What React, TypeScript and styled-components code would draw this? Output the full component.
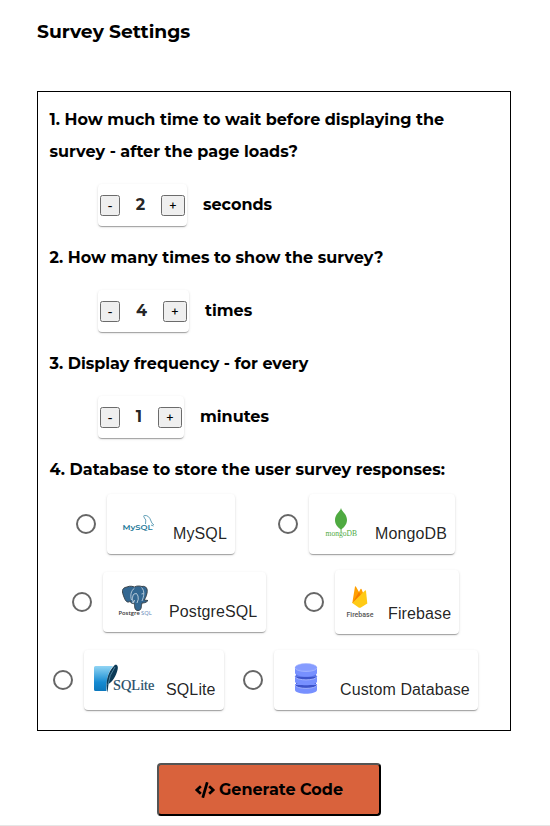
import React, { useState } from 'react';
import styled, { createGlobalStyle } from 'styled-components';
import { FaCode } from 'react-icons/fa';

const GlobalStyle = createGlobalStyle`
  *, *::before, *::after { box-sizing: border-box; }
  body {
    margin: 0;
    background: #fff;
    color: #000;
    font: 700 16px/32px Montserrat, Inter, sans-serif;
  }
`;

const Page = styled.main`
  height: 826px;
  padding: 16px 39px 0 37px;
  border-bottom: 1px solid #e6e6e6;
  display: flex;
  flex-direction: column;
`;

const Title = styled.h1`
  margin: 0 0 43px;
  font-size: 18.72px;
  line-height: 32px;
  letter-spacing: -0.04px;
`;

const Panel = styled.section`
  height: 640px;
  padding: 12px 11px 10px 12px;
  border: 1px solid #000;
`;

const Question = styled.div`
  margin-left: -0.5px;
  white-space: nowrap;
`;

const StepperRow = styled.div`
  display: flex;
  align-items: center;
  gap: 16px;
  height: 74px;
  padding-left: 48px;
`;

const Card = styled.div`
  display: flex;
  background: #fff;
  color: rgba(0, 0, 0, 0.87);
  border-radius: 4px;
  box-shadow: 0 2px 1px -1px rgba(0, 0, 0, 0.2), 0 1px 1px rgba(0, 0, 0, 0.14),
    0 1px 3px rgba(0, 0, 0, 0.12);
`;

const StepperCard = styled(Card)<{ $width: number }>`
  width: ${(p) => p.$width}px;
  height: 42px;
  padding: 0 2px;
  align-items: center;
  justify-content: space-between;
`;

const StepButton = styled.button<{ $width: number }>`
  width: ${(p) => p.$width}px;
  height: 21px;
  padding: 0;
  border: 1px solid #6b6b6b;
  border-radius: 2.5px;
  background: #efefef;
  color: #000;
  font: 500 13.33px/19px Montserrat, Inter, sans-serif;
`;

const Unit = styled.span`
  line-height: 32px;
`;

const OptionRow = styled.div<{ $indent: number; $gap: number }>`
  display: flex;
  align-items: center;
  height: 78px;
  padding-left: ${(p) => p.$indent}px;
  gap: ${(p) => p.$gap}px;
`;

const Option = styled.label`
  display: flex;
  align-items: center;
`;

const Radio = styled.input`
  appearance: none;
  flex: none;
  width: 20px;
  height: 20px;
  margin: 0 11px;
  border: 2px solid #666;
  border-radius: 50%;
  &:checked { background: radial-gradient(#1976d2 40%, transparent 45%); }
`;

const OptionCard = styled(Card)<{ $width: number; $height: number }>`
  width: ${(p) => p.$width}px;
  height: ${(p) => p.$height}px;
  align-items: flex-end;
`;

const OptionName = styled.span`
  padding: 0 0 11px 1px;
  font: 400 16px/18px 'Liberation Sans', Arial, sans-serif;
  letter-spacing: 0.12px;
  white-space: nowrap;
`;

const Logo = styled.svg`
  display: block;
  flex: none;
`;

const GenerateButton = styled.button`
  align-self: center;
  display: flex;
  align-items: center;
  justify-content: center;
  gap: 4px;
  width: 224px;
  height: 53px;
  margin: 32px 10px 0 0;
  padding: 0;
  border: 2px outset #000;
  border-radius: 4px;
  background: #d9623c;
  color: #000;
  font: inherit;
  svg { width: 20px; height: 16px; }
`;

const MySqlLogo = () => (
  <Logo width="65" height="60">
    <text x="15.500" y="36" fontSize="8" fontWeight="600" fontFamily="Montserrat, sans-serif" fill="#237999" textLength="30" lengthAdjust="spacingAndGlyphs">MySQL</text>
    <path d="M38.500 30L38.800 26Q35.500 21.500 37.500 21.500Q42 21 44 27Q44.500 29.500 47 31M44 31l2.500 1" fill="none" stroke="#237999" strokeWidth="0.7" />
  </Logo>
);

const MongoLogo = () => (
  <Logo width="65" height="60">
    <path d="M32 14C33 18 38 20 38 26C38 31 34 34 32.500 35.500V38H31.600V35.500C29 33 26 31 26 26C26 20 31 18 32 14Z" fill="#4faa41" />
    <text x="16.500" y="42" fontSize="7.500" fontWeight="400" fontFamily="'Liberation Serif', serif" fill="#4faa41" textLength="31.500" lengthAdjust="spacingAndGlyphs">mongoDB</text>
  </Logo>
);

const PostgresLogo = () => (
  <Logo width="65" height="60">
    <path d="M24 15C27 13.500 30 14.500 31.500 15C34 13.500 37 14 39 14.500C43 13.500 45 17 44 21C43.500 24 42 27 41 28L45 28.500C43 31 40 31 39 31C38 34 39 38.500 35 38.500C31 38.500 32 34 31 31C29 32 27.500 31 27.500 29C24 32 22 28 21 25C19 20 18 16 24 15Z" fill="#336791" stroke="#39434a" strokeWidth="1" />
    <path d="M31.500 16C28 19 27 23 28.500 28M31 31C29 29 29 24 31 22Q34 20 35 24Q36 27 34 31M38.500 15.500C42 19 41 24 39 29M38.500 22L40.500 21.500M29 30.500Q32 30 31.500 28" fill="none" stroke="#dce5ed" strokeWidth="0.75" />
    <text x="15.500" y="43" fontSize="5.800" fontWeight="600" fontFamily="'Open Sans', sans-serif" fill="#333">Postgre</text>
    <text x="38" y="43" fontSize="5.800" fontWeight="400" fontFamily="'Open Sans', sans-serif" fill="#6488b5">SQL</text>
  </Logo>
);

const FirebaseLogo = () => (
  <Logo width="52" height="64">
    <path d="M17.300 33L20 16.500Q20.500 16 21 16.700L24 22L25.500 19Q26 18.500 26.500 19L32 33Z" fill="#ffa000" />
    <path d="M17.300 33L24 22L26.500 26Z" fill="#f57c00" />
    <path d="M17.300 33L30 20.500Q30.800 20 31 21L32.300 33.500L25.500 37.700Q24.800 38 24 37.700Z" fill="#ffca16" />
    <text x="11.500" y="47.300" fontSize="6.800" fontWeight="500" fontFamily="Roboto, sans-serif" fill="#555" textLength="27" lengthAdjust="spacingAndGlyphs">Firebase</text>
  </Logo>
);

const SqliteLogo = () => (
  <Logo width="81" height="60">
    <defs>
      <linearGradient id="sqlite-blue" x1="0" y1="0" x2="0" y2="1">
        <stop offset="0" stopColor="#91d5f4" />
        <stop offset="0.65" stopColor="#168bd2" />
        <stop offset="1" stopColor="#0b78bd" />
      </linearGradient>
    </defs>
    <path d="M11.500 16H29C24 22 22 31 22.500 41H11.500Q10 41 10 39.500V17.500Q10 16 11.500 16Z" fill="url(#sqlite-blue)" />
    <path d="M31 14.800C33.500 14 34.500 17 33.500 20C32 26 28.500 32 24.500 34L23.500 42.500C21.500 34 22.500 23 31 14.800Z" fill="#0b3a57" />
    <path d="M31 17Q25 25 24 35" fill="none" stroke="#6fa3bf" strokeWidth="0.7" />
    <text x="29" y="40" fontSize="15" fontWeight="400" fontFamily="'Liberation Serif', serif" fill="#214b65" stroke="#214b65" strokeWidth="0.2" textLength="41.500" lengthAdjust="spacingAndGlyphs">SQLite</text>
  </Logo>
);

const DatabaseLogo = () => (
  <Logo width="65" height="60">
    <path d="M22 20H42V40H22Z" fill="#3d54cb" />
    {[34, 25.5, 17].map((y) => (
      <g key={y}>
        <path d={`M21 ${y}V${y + 6}C22 ${y + 11} 42 ${y + 11} 43 ${y + 6}V${y}Z`} fill="#7790ff" />
        <path d={`M21 ${y + 1}C22 ${y + 5.5} 42 ${y + 5.5} 43 ${y + 1}`} fill={y === 17 ? 'none' : '#3d54cb'} stroke="#a9b9ff" strokeWidth="0.9" />
      </g>
    ))}
    <ellipse cx="32" cy="17.200" rx="10.800" ry="3.600" fill="#869cff" stroke="#9badff" strokeWidth="0.5" />
  </Logo>
);

interface StepperProps {
  initial: number;
  unit: string;
  width: number;
}

function Stepper({ initial, unit, width }: StepperProps) {
  const [value, setValue] = useState(initial);
  return (
    <StepperRow>
      <StepperCard $width={width}>
        <StepButton $width={20} onClick={() => setValue(Math.max(0, value - 1))}>-</StepButton>
        <Unit>{value}</Unit>
        <StepButton $width={24} onClick={() => setValue(value + 1)}>+</StepButton>
      </StepperCard>
      <Unit>{unit}</Unit>
    </StepperRow>
  );
}

const optionRows = [
  { indent: 23, gap: 32, items: [
    { name: 'MySQL', width: 128, height: 60, Art: MySqlLogo },
    { name: 'MongoDB', width: 146, height: 60, Art: MongoLogo },
  ] },
  { indent: 19, gap: 27, items: [
    { name: 'PostgreSQL', width: 163, height: 60, Art: PostgresLogo },
    { name: 'Firebase', width: 124, height: 64, Art: FirebaseLogo },
  ] },
  { indent: 0, gap: 8, items: [
    { name: 'SQLite', width: 140, height: 60, Art: SqliteLogo },
    { name: 'Custom Database', width: 204, height: 60, Art: DatabaseLogo },
  ] },
];

const Options = styled.div`
  margin: -1px 0 0 -8px;
`;

export default function App() {
  return (
    <>
      <GlobalStyle />
      <Page>
        <Title>Survey Settings</Title>
        <Panel>
          <Question>1. How much time to wait before displaying the</Question>
          <Question>survey - after the page loads?</Question>
          <Stepper initial={2} unit="seconds" width={89} />
          <Question>2. How many times to show the survey?</Question>
          <Stepper initial={4} unit="times" width={91} />
          <Question>3. Display frequency - for every</Question>
          <Stepper initial={1} unit="minutes" width={86} />
          <Question>4. Database to store the user survey responses:</Question>
          <Options>
            {optionRows.map((row) => (
              <OptionRow key={row.indent} $indent={row.indent} $gap={row.gap}>
                {row.items.map(({ name, width, height, Art }) => (
                  <Option key={name}>
                    <Radio type="radio" name="database" />
                    <OptionCard $width={width} $height={height}>
                      <Art />
                      <OptionName>{name}</OptionName>
                    </OptionCard>
                  </Option>
                ))}
              </OptionRow>
            ))}
          </Options>
        </Panel>
        <GenerateButton>
          <FaCode />
          Generate Code
        </GenerateButton>
      </Page>
    </>
  );
}
